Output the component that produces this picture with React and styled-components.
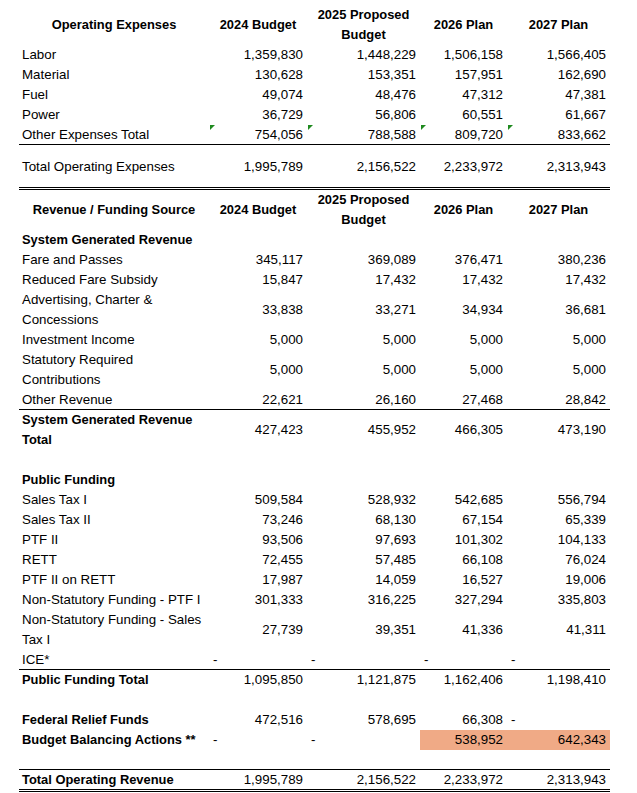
import React from 'react'
import styled, { createGlobalStyle } from 'styled-components'

const GlobalStyle = createGlobalStyle`
  html, body {
    margin: 0;
    padding: 0;
    background: #fff;
  }
  body {
    font-family: "Liberation Sans", Arial, sans-serif;
    font-size: 13.33px;
    color: #000;
    -webkit-font-smoothing: antialiased;
  }
`

const Sheet = styled.div`
  width: 591px;
  margin: 5px 0 0 19px;
`

const Row = styled.div`
  display: grid;
  grid-template-columns: 190px 98px 113px 87px 103px;
  box-sizing: border-box;
  height: ${p => p.$h || 20}px;
  font-weight: ${p => (p.$bold ? 700 : 400)};
  border-bottom: ${p =>
    p.$line === 'double' ? '3px double #000' : p.$line === 'single' ? '1px solid #000' : 'none'};
`

const HeadCell = styled.div`
  display: flex;
  align-items: center;
  justify-content: center;
  text-align: center;
  font-weight: 700;
  font-size: 12.9px;
  line-height: 20px;
`

const Label = styled.div`
  display: flex;
  align-items: center;
  padding-left: 3px;
  line-height: 20px;
  white-space: nowrap;
  font-size: ${p => (p.$bold ? '12.9px' : '13.33px')};
`

const Cell = styled.div`
  position: relative;
  display: flex;
  align-items: center;
  justify-content: ${p => (p.$dash ? 'flex-start' : 'flex-end')};
  padding: ${p => (p.$dash ? '0 0 0 4px' : '0 4px 0 0')};
  background: ${p => (p.$fill ? '#f0aa86' : 'transparent')};
  font-family: "Liberation Sans", Arial, sans-serif;
  font-weight: 400;
  line-height: 20px;
`

// little green error flag in the top-left corner of a cell
const Flag = styled.span`
  position: absolute;
  top: 0;
  left: 1px;
  width: 0;
  height: 0;
  border-top: 5px solid #1f8a1f;
  border-right: 5px solid transparent;
`

const heads = ['2024 Budget', ['2025 Proposed', 'Budget'], '2026 Plan', '2027 Plan']

const HeaderRow = ({ title }) => (
  <Row $h={40}>
    <HeadCell>{title}</HeadCell>
    {heads.map((h, i) => (
      <HeadCell key={i}>
        {Array.isArray(h) ? (
          <span>
            {h[0]}
            <br />
            {h[1]}
          </span>
        ) : (
          h
        )}
      </HeadCell>
    ))}
  </Row>
)

const Line = ({ label, vals = [], bold, line, h, flags, fills = [] }) => (
  <Row $bold={bold} $line={line} $h={h}>
    <Label $bold={bold}>
      {Array.isArray(label) ? (
        <span>
          {label[0]}
          <br />
          {label[1]}
        </span>
      ) : (
        label
      )}
    </Label>
    {[0, 1, 2, 3].map(i => {
      const v = vals[i]
      return (
        <Cell key={i} $dash={v === '-'} $fill={fills[i]}>
          {flags && <Flag />}
          {v}
        </Cell>
      )
    })}
  </Row>
)

const App = () => {
  return (
    <>
      <GlobalStyle />
      <Sheet>
        <HeaderRow title="Operating Expenses" />
        <Line label="Labor" vals={['1,359,830', '1,448,229', '1,506,158', '1,566,405']} />
        <Line label="Material" vals={['130,628', '153,351', '157,951', '162,690']} />
        <Line label="Fuel" vals={['49,074', '48,476', '47,312', '47,381']} />
        <Line label="Power" vals={['36,729', '56,806', '60,551', '61,667']} />
        <Line
          label="Other Expenses Total"
          vals={['754,056', '788,588', '809,720', '833,662']}
          line="single"
          flags
        />
        <Row $h={12} />
        <Line label="Total Operating Expenses" vals={['1,995,789', '2,156,522', '2,233,972', '2,313,943']} />
        <Row $h={13} $line="double" />

        <HeaderRow title="Revenue / Funding Source" />
        <Line label="System Generated Revenue" bold />
        <Line label="Fare and Passes" vals={['345,117', '369,089', '376,471', '380,236']} />
        <Line label="Reduced Fare Subsidy" vals={['15,847', '17,432', '17,432', '17,432']} />
        <Line
          label={['Advertising, Charter &', 'Concessions']}
          h={40}
          vals={['33,838', '33,271', '34,934', '36,681']}
        />
        <Line label="Investment Income" vals={['5,000', '5,000', '5,000', '5,000']} />
        <Line
          label={['Statutory Required', 'Contributions']}
          h={40}
          vals={['5,000', '5,000', '5,000', '5,000']}
        />
        <Line label="Other Revenue" vals={['22,621', '26,160', '27,468', '28,842']} line="single" />
        <Line
          label={['System Generated Revenue', 'Total']}
          bold
          h={40}
          vals={['427,423', '455,952', '466,305', '473,190']}
        />
        <Row />

        <Line label="Public Funding" bold />
        <Line label="Sales Tax I" vals={['509,584', '528,932', '542,685', '556,794']} />
        <Line label="Sales Tax II" vals={['73,246', '68,130', '67,154', '65,339']} />
        <Line label="PTF II" vals={['93,506', '97,693', '101,302', '104,133']} />
        <Line label="RETT" vals={['72,455', '57,485', '66,108', '76,024']} />
        <Line label="PTF II on RETT" vals={['17,987', '14,059', '16,527', '19,006']} />
        <Line label="Non-Statutory Funding - PTF I" vals={['301,333', '316,225', '327,294', '335,803']} />
        <Line
          label={['Non-Statutory Funding - Sales', 'Tax I']}
          h={40}
          vals={['27,739', '39,351', '41,336', '41,311']}
        />
        <Line label="ICE*" vals={['-', '-', '-', '-']} line="single" />
        <Line label="Public Funding Total" bold vals={['1,095,850', '1,121,875', '1,162,406', '1,198,410']} />
        <Row />

        <Line label="Federal Relief Funds" bold vals={['472,516', '578,695', '66,308', '-']} />
        <Line
          label="Budget Balancing Actions **"
          bold
          vals={['-', '-', '538,952', '642,343']}
          fills={[false, false, true, true]}
        />
        <Row $line="single" />
        <Line
          label="Total Operating Revenue"
          bold
          h={22}
          line="double"
          vals={['1,995,789', '2,156,522', '2,233,972', '2,313,943']}
        />
      </Sheet>
    </>
  )
}

export default App
